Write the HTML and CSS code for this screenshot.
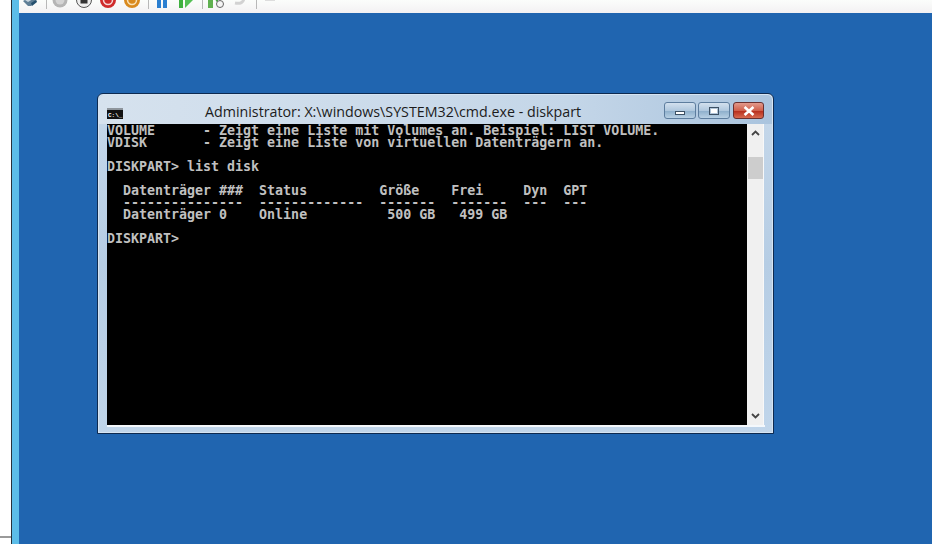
FILE: index.html
```html
<!DOCTYPE html>
<html lang="de">
<head>
<meta charset="utf-8">
<title>cmd.exe - diskpart</title>
<link rel="stylesheet" href="styles.css">
</head>
<body>
<div class="screen">
  <aside class="host-edge">
    <div class="host-white"><div class="host-rule"></div></div>
    <div class="host-line"></div>
    <div class="host-blue"></div>
  </aside>
  <main class="vm">
    <div class="toolbar">
      <svg class="tool" viewBox="0 0 16 16"><path d="M1 9l7-4 7 4-6 5-3 0z" fill="#5f7f96"/><path d="M3 8l5-3 3 2-5 3z" fill="#c9d6df"/><path d="M9 11l5-3 1 2-5 4z" fill="#24506e"/></svg>
      <span class="sep"></span>
      <svg class="tool" viewBox="0 0 16 16"><circle cx="8" cy="8" r="7.5" fill="#b5b5b5"/><circle cx="8" cy="8" r="4.5" fill="#d4d4d4"/></svg>
      <svg class="tool" viewBox="0 0 16 16"><circle cx="8" cy="8" r="7.5" fill="#eee" stroke="#555"/><rect x="4.5" y="4.5" width="7" height="7" fill="#333"/></svg>
      <svg class="tool" viewBox="0 0 16 16"><circle cx="8" cy="8" r="8" fill="#cf2b2b"/><circle cx="8" cy="8" r="4.5" fill="none" stroke="#f5d5d5" stroke-width="1.5"/></svg>
      <svg class="tool" viewBox="0 0 16 16"><circle cx="8" cy="8" r="8" fill="#d98a1e"/><circle cx="8" cy="8" r="4.5" fill="none" stroke="#f8e2b8" stroke-width="1.5"/></svg>
      <span class="sep"></span>
      <svg class="tool" viewBox="0 0 16 16"><rect x="3" y="0" width="4" height="16" fill="#2a7fd0"/><rect x="9" y="0" width="4" height="16" fill="#2a7fd0"/></svg>
      <svg class="tool" viewBox="0 0 16 16"><rect x="1" y="0" width="4" height="16" fill="#3fb03f"/><path d="M7 0l8 8-8 8z" fill="#55c055"/></svg>
      <span class="sep"></span>
      <svg class="tool" viewBox="0 0 16 16"><rect x="0" y="0" width="5" height="16" fill="#5fb04f"/><path d="M5 4l5-4v12z" fill="#46a846"/><circle cx="12" cy="12" r="3.5" fill="#f4f4f4" stroke="#666"/></svg>
      <svg class="tool" viewBox="0 0 16 16"><path d="M3 11c5 1 9 0 9-6" fill="none" stroke="#d2d2d2" stroke-width="3"/></svg>
      <span class="sep"></span>
      <svg class="tool" viewBox="0 0 16 16"><path d="M1 3h6V0h4v3h4v4H1z" fill="#c4c4c4"/><path d="M3 8h10v1H3z" fill="#ddd"/></svg>
    </div>
    <div class="desktop">
      <section class="window">
        <header class="titlebar">
          <svg class="app-icon" viewBox="0 0 16 11"><rect width="16" height="11" fill="#111"/><rect width="16" height="2" fill="#8e959c"/><text x="1" y="9" class="app-glyph">C:\_</text></svg>
          <h1 class="title">Administrator: X:\windows\SYSTEM32\cmd.exe - diskpart</h1>
          <div class="controls">
            <button class="ctl"><span class="min-mark"></span></button>
            <button class="ctl"><span class="max-mark"></span></button>
            <button class="ctl ctl-close"><svg class="close-mark" viewBox="0 0 12 9"><path d="M2 1l8 7M10 1l-8 7" stroke="#fff" stroke-width="2.4" fill="none"/></svg></button>
          </div>
        </header>
        <div class="client">
          <pre class="console">VOLUME      - Zeigt eine Liste mit Volumes an. Beispiel: LIST VOLUME.
VDISK       - Zeigt eine Liste von virtuellen Datenträgern an.

DISKPART&gt; list disk

  Datenträger ###  Status         Größe    Frei     Dyn  GPT
  ---------------  -------------  -------  -------  ---  ---
  Datenträger 0    Online          500 GB   499 GB

DISKPART&gt;</pre>
          <div class="scrollbar">
            <svg class="arrow" viewBox="0 0 9 6"><path d="M1 5l3.5-3.5L8 5" fill="none" stroke="#444" stroke-width="1.8"/></svg>
            <div class="thumb"></div>
            <svg class="arrow arrow-down" viewBox="0 0 9 6"><path d="M1 1l3.5 3.5L8 1" fill="none" stroke="#444" stroke-width="1.8"/></svg>
          </div>
        </div>
      </section>
    </div>
  </main>
</div>
</body>
</html>
```
FILE: styles.css
```css
* { box-sizing: border-box; }
html, body { margin: 0; padding: 0; width: 932px; height: 544px; overflow: hidden; background: #fff; }
.screen { display: flex; width: 932px; height: 544px; }
.host-edge { display: flex; width: 19px; flex: none; }
.host-white { width: 11px; background: #fff; padding-top: 536px; }
.host-rule { height: 2px; background: #9a9a9a; }
.host-line { width: 1px; background: #26323c; }
.host-blue { width: 7px; background: #5cbde8; }
.vm { flex: 1; display: flex; flex-direction: column; min-width: 0; }
.toolbar { height: 13px; flex: none; display: flex; padding-left: 3px; overflow: hidden; background: linear-gradient(#fbfdfb, #f3f1f3); }
.tool { width: 16px; height: 16px; margin: -8px 4px 0 4px; flex: none; }
.tool:first-child { margin-left: 0; }
.sep { width: 1px; height: 9px; margin: 0 1px 0 4px; background: #b8b8b8; flex: none; }
.desktop { flex: 1; position: relative; background: #2065b0; }
.window { position: absolute; left: 78px; top: 80px; width: 677px; height: 341px; display: flex; flex-direction: column; border: 1px solid #0d2a50; border-radius: 6px 6px 0 0; background: linear-gradient(#c6d8ea, #b6cde4 50%, #c0d5ea); box-shadow: inset 0 0 0 1px #d6e4f2; }
.titlebar { height: 29px; margin: 1px 1px 0; flex: none; display: flex; align-items: flex-start; padding: 7px 8px 0 8px; background: linear-gradient(90deg, #d6e2ee, #c4d6e8 70%, #aac4de); border-radius: 5px 5px 0 0; }
.app-icon { width: 16px; height: 11px; margin-top: 6px; flex: none; }
.app-glyph { font: bold 6px "Liberation Mono", monospace; fill: #fff; }
.title { margin: 0 0 0 82px; width: 459px; flex: none; font: 400 14.25px/20px "Open Sans", sans-serif; color: #1c1c1c; white-space: nowrap; }
.controls { display: flex; gap: 2px; }
.ctl { width: 32px; height: 17px; padding: 0; display: flex; align-items: center; justify-content: center; border: 1px solid #5d7d9e; border-radius: 3px; background: linear-gradient(#d2e0ee, #b0c8de 50%, #8fb0cc 55%, #b8d0e4); }
.ctl-close { width: 31px; margin-left: 1px; border-color: #6a3030; background: linear-gradient(#e29a8c, #d0604c 50%, #b8301e 55%, #d86a50); }
.min-mark { width: 10px; height: 4px; background: #fff; border: 1px solid #3c5064; margin-top: 5px; }
.max-mark { width: 10px; height: 8px; border: 1px solid #3c5064; background: #fff; box-shadow: inset 0 0 0 1px #b0c4d8; }
.close-mark { width: 14px; height: 10px; }
.client { display: flex; height: 303px; margin: 0 8px 0 9px; border-bottom: 2px solid #f4f8fc; }
.console { margin: 0; padding-top: 1px; width: 640px; height: 301px; flex: none; background: #000; color: #c0c0c0; font: 700 13.3px/12px "DejaVu Sans Mono", monospace; overflow: hidden; white-space: pre; }
.scrollbar { width: 17px; flex: none; display: flex; flex-direction: column; align-items: center; padding-top: 6px; background: #f0f0f0; border-right: 1px solid #f8f8f8; }
.arrow { width: 9px; height: 6px; flex: none; }
.thumb { width: 15px; height: 22px; margin-top: 21px; background: #cdcdcd; flex: none; }
.arrow-down { margin-top: auto; margin-bottom: 6px; }
```
